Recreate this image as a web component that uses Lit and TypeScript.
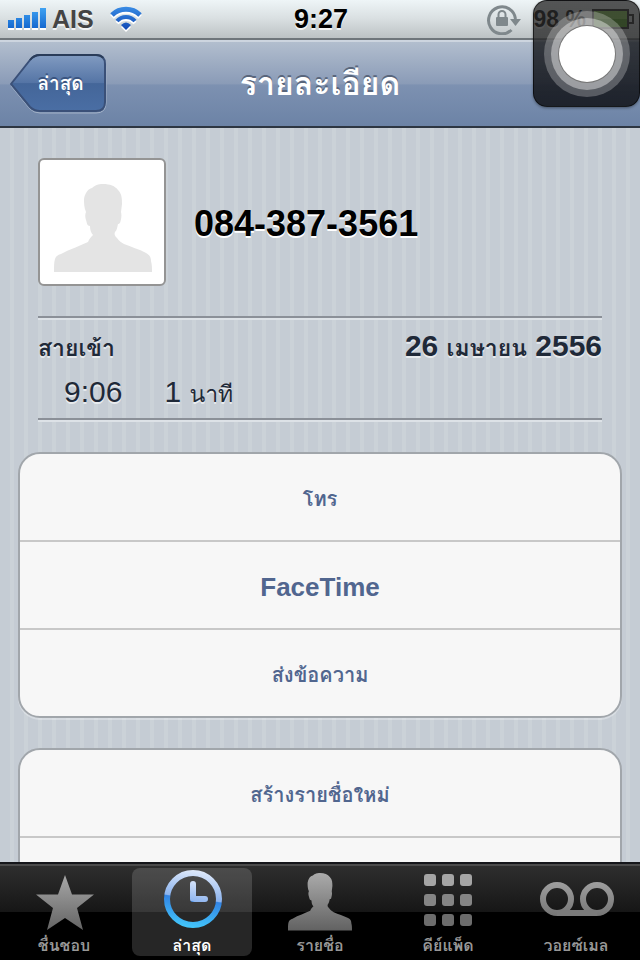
import { LitElement, html, css, svg } from "lit";
import { customElement, property, state } from "lit/decorators.js";
import { classMap } from "lit/directives/class-map.js";

const silhouette = "M0 88C0 82 0 78 1 75C2 72 4 71 7 70C16 65 26 62 34 58C35 55 37 53 39 51C37 49 36 46 36 42C33 42 33 39 32 36C31 33 31 30 32 28C30 24 30 19 30 15C31 9 34 5 38 4C42 0 47 0 49 0C56 0 61 2 64 6C68 10 68 15 68 20L67 28C68 32 67 36 66 39C65 40 64 40 64 40C63 44 63 46 61 48C60 51 61 52 63 54C65 57 67 58 70 60C77 63 85 65 92 69C96 71 97 74 97 77C98 81 98 84 98 88Z";

@customElement("status-bar")
class StatusBar extends LitElement {
  static styles = css`
    :host {
      display: grid;
      grid-template-columns: 1fr auto 1fr;
      align-items: center;
      height: 40px;
      box-sizing: border-box;
      padding: 0 6px 0 8px;
      border-bottom: 2px solid #6f767b;
      background: linear-gradient(#eef5f7, #d9dfe1 50%, #bcc2c4);
      font: bold 27px/38px "Liberation Sans", Arial, sans-serif;
      color: #000;
      text-shadow: 0 2px 0 rgba(255, 255, 255, 0.8);
    }
    .side { display: flex; align-items: center; }
    .end { justify-content: flex-end; gap: 6px; }
    .carrier { font-size: 25px; color: #444; margin: 0 16px 0 6px; }
    .percent { font-size: 23px; }
    .lock { margin-right: 6px; }
    svg { display: block; }
  `;

  render() {
    const arcs = svg`
      <path d="M2 9A20 20 0 0 1 30 9" stroke-width="5" fill="none" />
      <path d="M7 15A12 12 0 0 1 25 15" stroke-width="4" fill="none" />
      <path d="M11 19Q16 14 21 19L16 24Z" stroke="none" />`;
    return html`
      <div class="side">
        <svg width="38" height="22" viewBox="0 0 38 22" aria-hidden="true">
          <defs><linearGradient id="s" x1="0" y1="0" x2="0" y2="1">
            <stop offset="0" stop-color="#3fa2f2" /><stop offset="1" stop-color="#1568cf" />
          </linearGradient></defs>
          <path fill="#fff" d="M0 14h6v8H0zM8 12h6v10H8zM16 9h6v13h-6zM24 6h6v16h-6zM32 4h6v18h-6z" />
          <path fill="url(#s)" d="M0 12h6v8H0zM8 10h6v10H8zM16 7h6v13h-6zM24 4h6v16h-6zM32 0h6v20h-6z" />
        </svg>
        <span class="carrier">AIS</span>
        <svg width="32" height="26" viewBox="0 0 32 26" aria-hidden="true">
          <defs><linearGradient id="w" gradientUnits="userSpaceOnUse" x1="0" y1="0" x2="0" y2="24">
            <stop offset="0" stop-color="#3a8ee6" /><stop offset="1" stop-color="#1148b4" />
          </linearGradient></defs>
          <g fill="#fff" stroke="#fff" transform="translate(0 2)">${arcs}</g>
          <g fill="url(#w)" stroke="url(#w)">${svg`
            <path d="M2 9A20 20 0 0 1 30 9" stroke-width="5" fill="none" />
            <path d="M7 15A12 12 0 0 1 25 15" stroke-width="4" fill="none" />
            <path d="M11 19Q16 14 21 19L16 24Z" stroke="none" />`}</g>
        </svg>
      </div>
      <span>9:27</span>
      <div class="side end">
        <svg class="lock" width="36" height="32" viewBox="0 0 36 32" aria-hidden="true">
          <path d="M25.500 27A13.500 13.500 0 1 1 29.500 16" fill="none" stroke="#7f888c" stroke-width="3" />
          <path d="M24 16h11l-5.500 7z" fill="#7f888c" />
          <rect x="10" y="14" width="12" height="9" rx="1" fill="#7f888c" />
          <path d="M12.500 15v-3.500a3.500 3.500 0 0 1 7 0V15" fill="none" stroke="#7f888c" stroke-width="2" />
        </svg>
        <span class="percent">98 %</span>
        <svg width="42" height="20" viewBox="0 0 42 20" aria-hidden="true">
          <rect x="1" y="1" width="35" height="18" fill="#8fd653" stroke="#222" stroke-width="2" />
          <rect x="2" y="10" width="33" height="8" fill="#57ad22" />
          <path d="M37 6h4v8h-4" fill="none" stroke="#222" stroke-width="2" />
        </svg>
      </div>
    `;
  }
}

@customElement("nav-header")
class NavHeader extends LitElement {
  static styles = css`
    :host {
      display: grid;
      grid-template-columns: 1fr auto 1fr;
      align-items: center;
      height: 88px;
      box-sizing: border-box;
      padding: 0 10px;
      border-top: 2px solid #cdd5df;
      border-bottom: 2px solid #2d3642;
      background: linear-gradient(#b2bece, #8a9bb7 50%, #7d91b1 51%, #6c83a6);
      font-family: "Liberation Sans", Loma, "Noto Sans Thai Looped", "Noto Sans", sans-serif;
      font-weight: bold;
      color: #fff;
    }
    h1 { margin: 0; font-size: 32px; line-height: 40px; text-shadow: 0 -2px 0 #59667c; }
    .back {
      display: grid;
      justify-self: start;
      align-items: center;
      padding: 0;
      border: 0;
      background: none;
      color: inherit;
      font: inherit;
      font-size: 19px;
      line-height: 28px;
      text-shadow: 0 -2px 0 #3a5480;
      cursor: pointer;
    }
    .back > * { grid-area: 1 / 1; }
    .back svg { display: block; }
    .label { padding-left: 4px; text-align: center; }
  `;

  render() {
    return html`
      <button class="back" type="button">
        <svg width="97" height="60" viewBox="0 0 97 60" aria-hidden="true">
          <defs><linearGradient id="b" x1="0" y1="0" x2="0" y2="1">
            <stop offset="0" stop-color="#819bc1" /><stop offset="0.500" stop-color="#5474a5" />
            <stop offset="0.510" stop-color="#446699" /><stop offset="1" stop-color="#4a6ea4" />
          </linearGradient></defs>
          <path transform="translate(0 2)" d="M1 30L20 6Q24 1 30 1H86Q96 1 96 11V47Q96 57 86 57H30Q24 57 20 53Z" fill="none" stroke="#a3b2c8" stroke-width="1" />
          <path d="M1 30L20 6Q24 1 30 1H86Q95 1 95 10V48Q95 57 86 57H30Q24 57 20 53Z" fill="url(#b)" stroke="#3a5078" stroke-width="2" />
          <path d="M20 6Q24 1 30 1H86Q91 1 93 4" fill="none" stroke="#2a3c59" stroke-width="2" />
        </svg>
        <span class="label">ล่าสุด</span>
      </button>
      <h1>รายละเอียด</h1>
    `;
  }
}

@customElement("action-group")
class ActionGroup extends LitElement {
  @property({ attribute: false }) actions: string[] = [];

  static styles = css`
    :host {
      display: block;
      flex: none;
      margin: 0 18px;
      border: 2px solid #a1a6ab;
      border-radius: 22px;
      background: #f7f7f7;
      overflow: hidden;
      box-shadow: 0 2px 0 rgba(255, 255, 255, 0.3);
    }
    .action {
      display: block;
      width: 100%;
      height: 86px;
      box-sizing: content-box;
      padding: 0;
      border: 0;
      background: none;
      color: #51668f;
      font: bold 20px/32px "Liberation Sans", Loma, "Noto Sans Thai Looped", "Noto Sans", sans-serif;
      cursor: pointer;
    }
    .action + .action { border-top: 2px solid #c8c8c8; }
    .action span { display: block; padding-top: 4px; }
    .latin { font-size: 26px; }
  `;

  render() {
    return this.actions.map(
      (a) => html`<button type="button" class=${classMap({ action: true, latin: /^[A-Za-z]/.test(a) })}><span>${a}</span></button>`,
    );
  }
}

@customElement("tab-bar")
class TabBar extends LitElement {
  @state() private selected = 1;

  static styles = css`
    :host {
      display: flex;
      flex: none;
      height: 98px;
      box-sizing: border-box;
      border-top: 2px solid #15161a;
      background: linear-gradient(#4b4b4b 2px, #2e2e2e 2px, #161616 48px, #000 48px);
    }
    .tab {
      flex: 1;
      min-width: 0;
      display: flex;
      flex-direction: column;
      align-items: center;
      margin: 4px;
      padding: 0;
      border: 0;
      border-radius: 8px;
      background: none;
      color: #979797;
      font: bold 16px/28px "Liberation Sans", Loma, "Noto Sans Thai Looped", "Noto Sans", sans-serif;
      white-space: nowrap;
      cursor: pointer;
    }
    .on { color: #fff; background: rgba(255, 255, 255, 0.15); }
    svg { display: block; flex: none; width: 76px; height: 64px; }
  `;

  private tabs = [
    {
      label: "ชื่นชอบ",
      icon: svg`<path fill="url(#g)" d="M39 7L46 26.500H68L51 40L57 62L39 50L21 62L27 40L10 26.500H32Z"/>`,
    },
    {
      label: "ล่าสุด",
      icon: svg`<circle cx="39" cy="31" r="26" fill="none" stroke="url(#c)" stroke-width="6"/>
        <path d="M39 16V31H51" fill="none" stroke="url(#h)" stroke-width="6" stroke-linecap="round" stroke-linejoin="round"/>`,
    },
    {
      label: "รายชื่อ",
      icon: svg`<path fill="url(#p)" transform="translate(6 5) scale(0.653)" d=${silhouette} />`,
    },
    {
      label: "คีย์แพ็ด",
      icon: [0, 1, 2].map((r) =>
        [0, 1, 2].map(
          (c) => svg`<rect x=${14 + c * 18} y=${6 + r * 20} width="12" height="12" rx="3" fill=${["#a5a5a5", "#858585", "#6c6c6c"][r]}/>`,
        ),
      ),
    },
    {
      label: "วอยซ์เมล",
      icon: svg`<g fill="none" stroke="url(#g)" stroke-width="6"><circle cx="19" cy="31" r="14"/><circle cx="59" cy="31" r="14"/></g>
        <path d="M19 42H59V48H19Z" fill="#7b7b7b"/>`,
    },
  ];

  render() {
    return this.tabs.map(
      (t, i) => html`
        <button
          type="button"
          class=${classMap({ tab: true, on: i === this.selected })}
          @click=${() => (this.selected = i)}
        >
          <svg viewBox="0 0 76 64" aria-hidden="true">
            <defs>
              <linearGradient id="g" gradientUnits="userSpaceOnUse" x1="0" y1="4" x2="0" y2="64">
                <stop offset="0" stop-color="#ababab" /><stop offset="1" stop-color="#626262" />
              </linearGradient>
              <linearGradient id="p" x1="0" y1="0" x2="0" y2="1">
                <stop offset="0" stop-color="#ababab" /><stop offset="1" stop-color="#626262" />
              </linearGradient>
              <linearGradient id="c" gradientUnits="userSpaceOnUse" x1="42" y1="2" x2="34" y2="60">
                <stop offset="0" stop-color="#dfe9fa" /><stop offset="0.480" stop-color="#8bb3ee" />
                <stop offset="0.500" stop-color="#3284e4" /><stop offset="1" stop-color="#43c8fb" />
              </linearGradient>
              <linearGradient id="h" gradientUnits="userSpaceOnUse" x1="38" y1="13" x2="34" y2="35">
                <stop offset="0" stop-color="#d3e1f8" /><stop offset="0.880" stop-color="#8fb5ef" />
                <stop offset="0.900" stop-color="#4a93ea" /><stop offset="1" stop-color="#4a93ea" />
              </linearGradient>
            </defs>
            ${t.icon}
          </svg>
          <span>${t.label}</span>
        </button>
      `,
    );
  }
}

@customElement("app-root")
class AppRoot extends LitElement {
  static styles = css`
    :host {
      position: relative;
      display: flex;
      flex-direction: column;
      height: 100vh;
      overflow: hidden;
      font-family: "Liberation Sans", Loma, "Noto Sans Thai Looped", "Noto Sans", sans-serif;
      color: #1f2938;
    }
    status-bar, nav-header { flex: none; }
    main {
      flex: 1;
      min-height: 0;
      overflow: hidden;
      display: flex;
      flex-direction: column;
      gap: 30px;
      padding-top: 30px;
      background: repeating-linear-gradient(90deg, #c5ccd4 0 10px, #cbd2d8 10px 14px);
    }
    .contact { display: flex; align-items: center; gap: 28px; margin: 0 38px; }
    .photo {
      display: flex;
      flex: none;
      justify-content: center;
      align-items: flex-end;
      width: 128px;
      height: 128px;
      box-sizing: border-box;
      padding: 0 0 12px 2px;
      border: 2px solid #949494;
      border-radius: 6px;
      background: #fff;
    }
    h2 { margin: 0; padding-top: 4px; font-size: 36px; line-height: 44px; color: #000; text-shadow: 0 2px 0 #fff; }
    .call {
      flex: none;
      margin: 0 38px 2px;
      box-sizing: border-box;
      height: 104px;
      padding-top: 5px;
      border: solid #8b9098;
      border-width: 2px 0;
      box-shadow: 0 2px 0 #dde2e7, inset 0 2px 0 #dde2e7;
      font-size: 30px;
      line-height: 46px;
      text-shadow: 0 2px 0 rgba(255, 255, 255, 0.6);
    }
    .row { display: flex; align-items: baseline; height: 46px; white-space: pre; }
    .head { justify-content: space-between; font-weight: bold; }
    .log { gap: 42px; padding-left: 26px; }
    .th { font-size: 23px; }
    .touch {
      position: absolute;
      top: 0;
      right: 0;
      display: grid;
      place-items: center;
      width: 107px;
      height: 107px;
      padding: 0;
      border: 1px solid rgba(0, 0, 0, 0.6);
      border-radius: 14px;
      background: linear-gradient(rgba(40, 40, 40, 0.78), rgba(40, 40, 40, 0.78) 36%, rgba(24, 26, 30, 0.82) 38%, rgba(18, 20, 26, 0.88));
      box-shadow: 0 1px 3px rgba(0, 0, 0, 0.4);
    }
    .knob {
      width: 56px;
      height: 56px;
      border-radius: 50%;
      background: #fff;
      box-shadow: 0 0 0 1px #777, 0 0 0 8px rgba(255, 255, 255, 0.4), 0 0 0 15px rgba(255, 255, 255, 0.25);
    }
  `;

  render() {
    return html`
      <status-bar></status-bar>
      <nav-header></nav-header>
      <main>
        <section class="contact">
          <div class="photo">
            <svg width="98" height="88" viewBox="0 0 98 88" aria-hidden="true"><path d=${silhouette} fill="#e4e4e4" /></svg>
          </div>
          <h2>084-387-3561</h2>
        </section>
        <section class="call">
          <div class="row head">
            <span class="th">สายเข้า</span>
            <time datetime="2013-04-26">26 <span class="th">เมษายน</span> 2556</time>
          </div>
          <div class="row log">
            <time datetime="09:06">9:06</time>
            <span>1 <span class="th">นาที</span></span>
          </div>
        </section>
        <action-group .actions=${["โทร", "FaceTime", "ส่งข้อความ"]}></action-group>
        <action-group .actions=${["สร้างรายชื่อใหม่", ""]}></action-group>
      </main>
      <tab-bar></tab-bar>
      <button class="touch" type="button" aria-label="AssistiveTouch"><span class="knob"></span></button>
    `;
  }
}
